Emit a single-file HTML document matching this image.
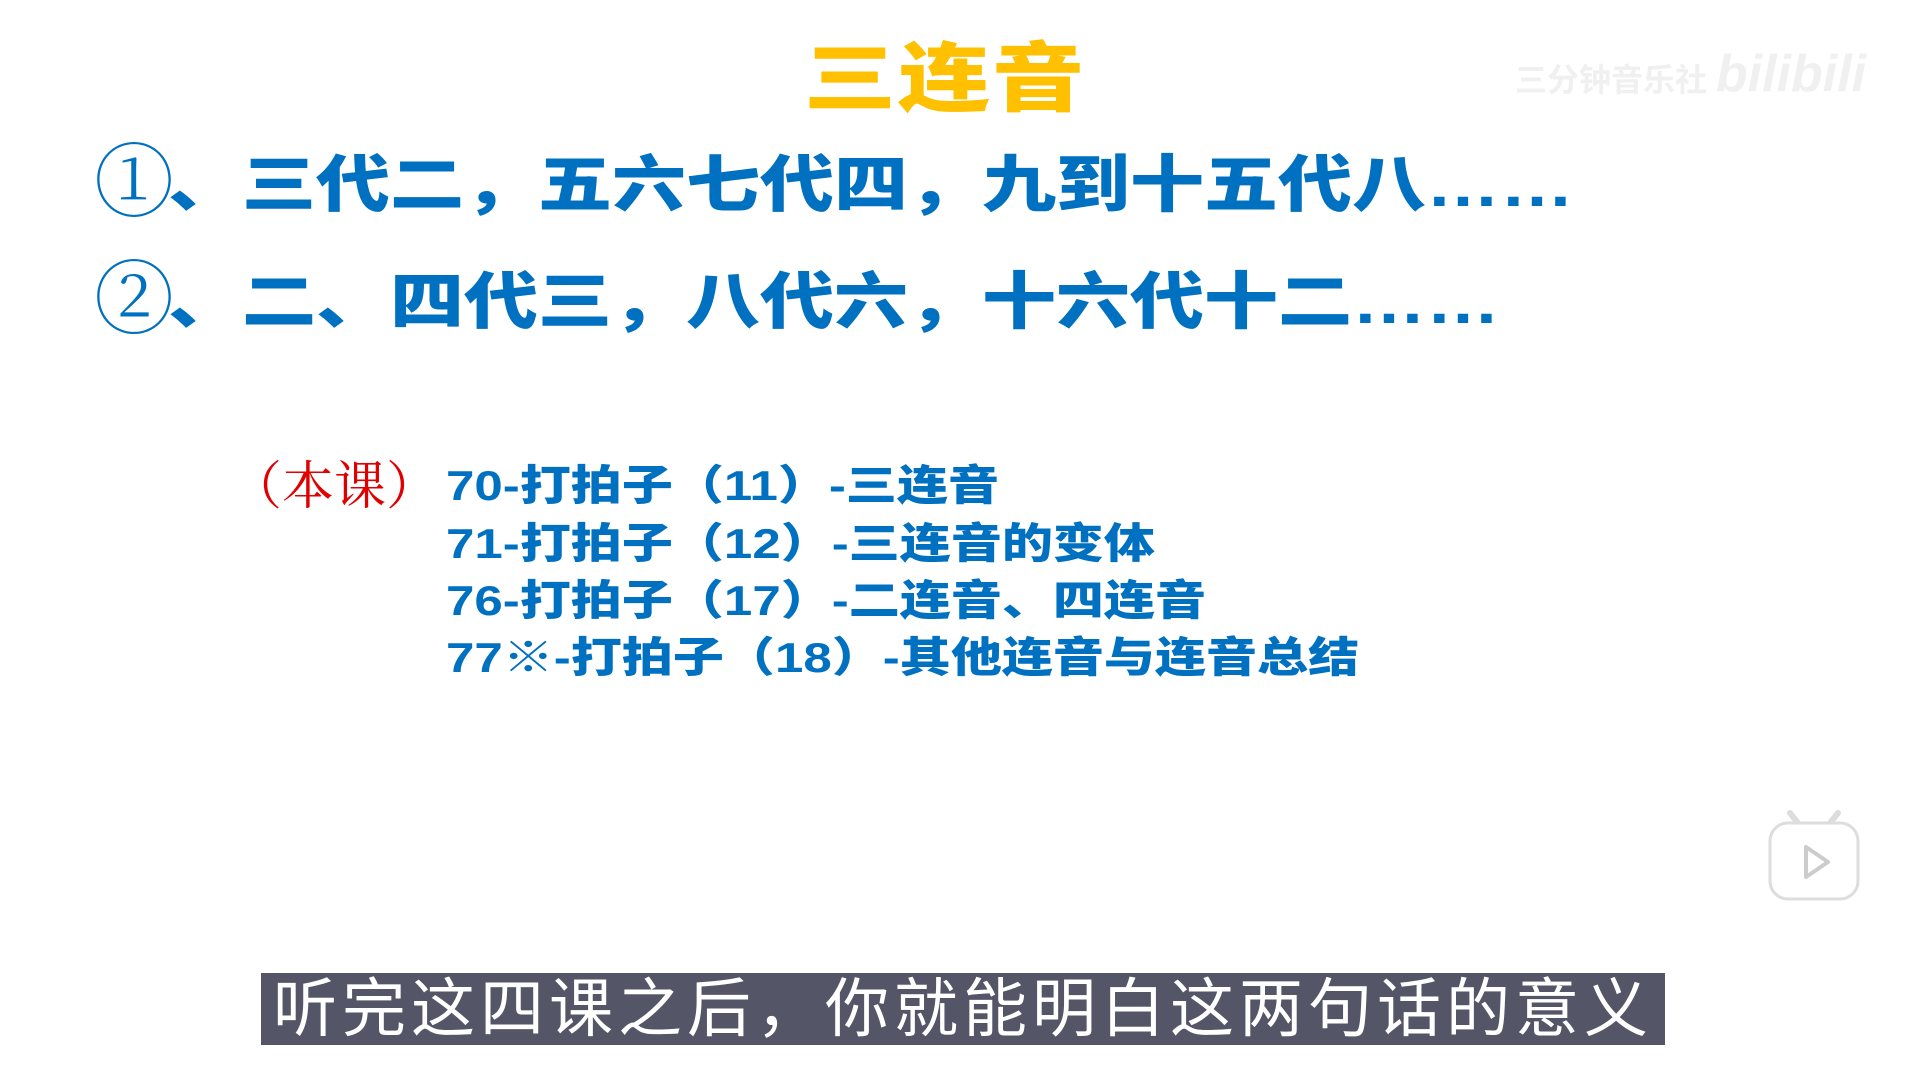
<!DOCTYPE html>
<html><head><meta charset="utf-8"><style>
html,body{margin:0;padding:0;background:#fff;}
body{width:1920px;height:1080px;position:relative;overflow:hidden;font-family:"Liberation Sans","Noto Sans CJK SC",sans-serif;}
.a{position:absolute;white-space:nowrap;}
.title{left:804px;top:42px;font-size:92px;font-weight:900;color:#FFC000;transform:scaleY(0.82);transform-origin:left top;letter-spacing:2px;line-height:1;}
.big{font-size:74px;font-weight:900;color:#0070C0;line-height:1;transform:scaleY(0.84);transform-origin:left top;}
.circ{font-family:"Liberation Serif","Noto Serif CJK SC",serif;font-weight:300;font-size:80px;color:#0070C0;line-height:1;}
.les{left:446px;font-size:44px;font-weight:900;color:#0070C0;line-height:1;transform:scale(1.16,0.95);transform-origin:left top;}
.red{left:230px;top:462px;font-family:"Liberation Serif","Noto Serif CJK SC",serif;font-size:52px;color:#E00000;line-height:1;}
.sub{left:261px;top:983px;width:1416px;height:72px;background:#545566;color:#fff;font-size:64px;line-height:72px;text-align:center;letter-spacing:5px;}
.wm{left:1515px;top:44px;color:#f0f0f0;font-size:32px;font-weight:700;}
</style></head><body>
<div class="a title">三连音</div>
<div class="a wm">三分钟音乐社 <span style="font-size:52px;font-style:italic;">bilibili</span></div>

<div class="a circ" style="left:94px;top:144px;">①</div>
<div class="a big" style="left:168px;top:154px;">、三代二，五六七代四，九到十五代八……</div>
<div class="a circ" style="left:94px;top:261px;">②</div>
<div class="a big" style="left:168px;top:271px;">、二、四代三，八代六，十六代十二……</div>

<div class="a red">（本课）</div>
<div class="a les" style="top:466px;">70-打拍子（11）-三连音</div>
<div class="a les" style="top:524px;">71-打拍子（12）-三连音的变体</div>
<div class="a les" style="top:581px;">76-打拍子（17）-二连音、四连音</div>
<div class="a les" style="top:638px;">77※-打拍子（18）-其他连音与连音总结</div>

<svg class="a" style="left:1766px;top:809px;" width="96" height="94" viewBox="0 0 96 94">
<path d="M32 14 L24 4 M64 14 L72 4" stroke="#ddd" stroke-width="6" stroke-linecap="round"/>
<rect x="4" y="14" width="88" height="76" rx="18" fill="#fff" stroke="#ddd" stroke-width="3"/>
<path d="M40 38 L40 68 L62 53 Z" fill="none" stroke="#ccc" stroke-width="4" stroke-linejoin="round"/>
</svg>

<div class="a sub" style="top:973px;width:1404px;">听完这四课之后，你就能明白这两句话的意义</div>
</body></html>
